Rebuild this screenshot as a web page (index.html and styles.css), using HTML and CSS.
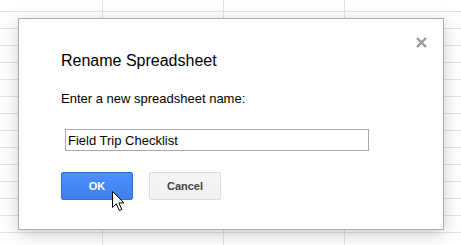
FILE: index.html
```html
<!DOCTYPE html>
<html lang="en">
<head>
    <meta charset="UTF-8">
    <meta name="viewport" content="width=device-width, initial-scale=1.0">
    <title>Rename Spreadsheet</title>
    <link rel="stylesheet" href="styles.css">
</head>
<body>
    <div class="sheet">
        <div class="dialog">
            <button class="close" aria-label="Close">
                <svg width="11" height="11" viewBox="0 0 11 11">
                    <path d="M1 1 L10 10 M10 1 L1 10" stroke="#999" stroke-width="2.4" fill="none"/>
                </svg>
            </button>
            <h1 class="title">Rename Spreadsheet</h1>
            <p class="label">Enter a new spreadsheet name:</p>
            <input class="name" type="text" value="Field Trip Checklist">
            <div class="buttons">
                <button class="btn btn-ok">OK</button>
                <button class="btn btn-cancel">Cancel</button>
            </div>
            <!-- mouse pointer hovering the OK button -->
            <svg class="pointer" width="14" height="21" viewBox="0 0 14 21">
                <path d="M0.5 0.5 V16.5 L4.3 12.8 L7.3 19.5 L9.8 18.4 L6.9 11.9 H12 Z" fill="#fff" stroke="#000" stroke-width="1" stroke-linejoin="miter"/>
            </svg>
        </div>
    </div>
</body>
</html>
```

FILE: styles.css
```css
body {
    margin: 0;
    padding: 0;
    font-family: "Liberation Sans", Arial, sans-serif;
    background-color: #fff;
}

/* spreadsheet grid behind the dialog */
.sheet {
    height: 245px;
    box-sizing: border-box;
    padding: 18px 0 0 18px;
    background-image:
        linear-gradient(#e2e3e3 1px, transparent 1px),
        linear-gradient(90deg, #e2e3e3 1px, transparent 1px);
    background-size: 100% 17px, 121px 100%;
    background-position: 0 11px, 102px 0;
    overflow: hidden;
}

.dialog {
    position: relative;
    box-sizing: border-box;
    width: 426px;
    height: 212px;
    padding: 32px 42px 0 42px;
    background-color: #fff;
    border: 1px solid #acacac;
    box-shadow: 0 4px 16px rgba(0, 0, 0, 0.2);
}

.close {
    position: absolute;
    top: 18px;
    right: 16px;
    width: 11px;
    height: 11px;
    padding: 0;
    border: 0;
    background: none;
    line-height: 0;
}

.title {
    margin: 0;
    font-size: 16px;
    font-weight: normal;
    line-height: 20px;
    color: #000;
}

.label {
    margin: 20px 0 0 0;
    font-size: 13px;
    line-height: 16px;
    color: #000;
}

.name {
    display: block;
    box-sizing: border-box;
    width: 304px;
    height: 22px;
    margin: 22px 0 0 4px;
    padding: 1px 2px;
    border: 1px solid #a9a9a9;
    border-radius: 0;
    font-family: "Liberation Sans", Arial, sans-serif;
    font-size: 13px;
    color: #000;
    outline: none;
}

.buttons {
    display: flex;
    gap: 16px;
    margin-top: 21px;
}

.btn {
    box-sizing: border-box;
    width: 72px;
    height: 28px;
    padding: 0 8px;
    border-radius: 2px;
    font-family: "Liberation Sans", Arial, sans-serif;
    font-size: 11px;
    font-weight: bold;
}

.btn-ok {
    color: #fff;
    background-image: linear-gradient(#4d90fe, #3f7fe8);
    border: 1px solid #2f6fd8;
}

.btn-cancel {
    color: #444;
    background-image: linear-gradient(#f5f5f5, #f1f1f1);
    border: 1px solid #dcdcdc;
}

.pointer {
    position: absolute;
    left: 93px;
    top: 172px;
}
```
